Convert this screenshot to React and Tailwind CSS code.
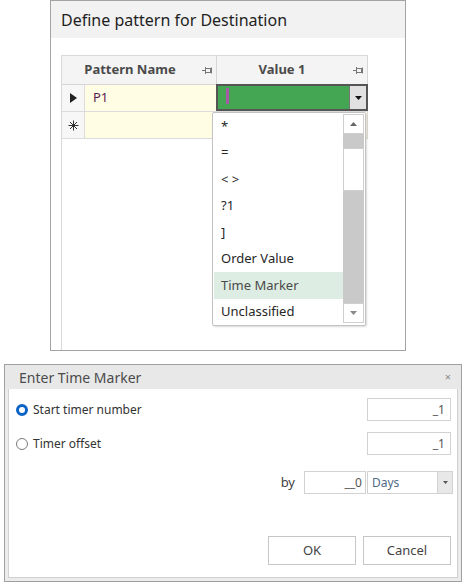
import React from "react";

const Pin = ({ className = "" }) => (
  <svg width="11" height="9" viewBox="0 0 11 9" className={className} fill="none" stroke="#777" strokeWidth="1">
    <line x1="0" y1="4.5" x2="3" y2="4.5" />
    <line x1="3.5" y1="1" x2="3.5" y2="8" />
    <rect x="3.5" y="2.5" width="5" height="4" />
    <line x1="9.5" y1="1.5" x2="9.5" y2="7.5" />
  </svg>
);

const Asterisk = () => (
  <svg width="11" height="11" viewBox="0 0 11 11" stroke="#333" strokeWidth="1">
    <line x1="5.5" y1="0.5" x2="5.5" y2="10.5" />
    <line x1="0.5" y1="5.5" x2="10.5" y2="5.5" />
    <line x1="2" y1="2" x2="9" y2="9" />
    <line x1="9" y1="2" x2="2" y2="9" />
  </svg>
);

const listItems = ["*", "=", "< >", "?1", "]", "Order Value", "Time Marker", "Unclassified"];

function PatternEditor() {
  return (
    <div className="ml-[50px] w-[356px] h-[351px] border border-[#a3a3a3] flex flex-col relative">
      <div className="h-[37px] bg-[#f2f2f2] pl-[10px] flex items-center text-[16px] text-[#1e1e1e]">
        Define pattern for Destination
      </div>
      <div className="flex-1 bg-white pt-[17px] pl-[10px] pr-[37px] flex flex-col">
        <div className="flex-1 border-l border-t border-[#d9d9d9] flex flex-col">
          {/* header */}
          <div className="h-[29px] flex border-b border-r border-[#d6d6d6] bg-[#f4f4f4] text-[13px] font-bold text-[#4a4a4a]">
            <div className="w-[155px] border-r border-[#d6d6d6] relative flex items-center justify-center pr-[18px]">
              Pattern Name
              <Pin className="absolute right-[3px] top-[10px]" />
            </div>
            <div className="flex-1 relative flex items-center justify-center pr-[20px]">
              Value 1
              <Pin className="absolute right-[3px] top-[10px]" />
            </div>
          </div>
          {/* row 1 */}
          <div className="h-[27px] flex border-b border-r border-[#dcdcdc]">
            <div className="w-[23px] border-r border-[#dcdcdc] bg-[#f7f7f7] flex items-center justify-center">
              <svg width="7" height="10" viewBox="0 0 7 10"><path d="M0 0 L7 5 L0 10 Z" fill="#222" /></svg>
            </div>
            <div className="w-[132px] border-r border-[#dcdcdc] bg-[#fffde3] flex items-center pl-[8px] text-[13px] text-[#561d54]">
              P1
            </div>
            <div className="flex-1 relative">
              <div className="absolute left-[-1px] top-[-1px] right-[-1px] bottom-[0px] border-2 border-[#555] bg-[#44a553] flex">
                <div className="flex-1 relative">
                  <div className="absolute left-[8px] top-[2px] w-[3px] h-[16px] bg-[#a65aa6]" />
                </div>
                <div className="w-[17px] bg-[#e1e1e1] border-l border-[#777] flex items-center justify-center">
                  <svg width="7" height="4" viewBox="0 0 7 4"><path d="M0 0 L7 0 L3.5 4 Z" fill="#111" /></svg>
                </div>
              </div>
            </div>
          </div>
          {/* row 2 (new row) */}
          <div className="h-[27px] flex border-b border-r border-[#dcdcdc]">
            <div className="w-[23px] border-r border-[#dcdcdc] bg-[#f7f7f7] flex items-center justify-center">
              <Asterisk />
            </div>
            <div className="w-[132px] border-r border-[#dcdcdc] bg-[#fffde3]" />
            <div className="flex-1 bg-[#fffde3]" />
          </div>
          <div className="flex-1" />
        </div>
      </div>

      {/* value picker list */}
      <div className="absolute left-[161px] top-[111px] w-[154px] h-[214px] bg-white border border-[#c3c3c3] rounded-[2px] shadow-[1px_1px_2px_rgba(0,0,0,0.15)] flex">
        <div className="flex-1 flex flex-col pl-[1px]">
          {listItems.map((t) => (
            <div
              key={t}
              className={
                "h-[26.5px] flex items-center pl-[7px] text-[13px] " +
                (t === "Time Marker" ? "bg-[#ddede3] text-[#4a4a4a]" : "text-[#262626]")
              }
            >
              {t}
            </div>
          ))}
        </div>
        <div className="w-[21px] mr-[1px] mt-[1px] mb-[2px] bg-[#c9c9c9] flex flex-col">
          <div className="h-[20px] bg-white border border-[#cfcfcf] flex items-center justify-center">
            <svg width="7" height="4" viewBox="0 0 7 4"><path d="M0 4 L7 4 L3.5 0 Z" fill="#666" /></svg>
          </div>
          <div className="h-[14px]" />
          <div className="h-[43px] bg-white border border-[#cfcfcf]" />
          <div className="flex-1" />
          <div className="h-[20px] bg-white border border-[#cfcfcf] flex items-center justify-center">
            <svg width="7" height="4" viewBox="0 0 7 4"><path d="M0 0 L7 0 L3.5 4 Z" fill="#888" /></svg>
          </div>
        </div>
      </div>
    </div>
  );
}

function TimeMarkerDialog() {
  return (
    <div className="mt-[13px] ml-[4px] w-[458px] h-[218px] border border-[#a0a0a0] flex flex-col bg-[#ececec]">
      <div className="h-[24px] bg-[#e8e8e8] flex items-center pl-[14px] pr-[10px] text-[14px] text-[#4b4b4b]">
        <span className="flex-1">Enter Time Marker</span>
        <span className="text-[11px] text-[#8a8a8a]">×</span>
      </div>
      <div className="flex-1 px-[3px] pb-[3px] flex flex-col">
        <div className="flex-1 bg-white border-l border-r border-b border-[#d0d0d0] pt-[9px] pl-[7px] pr-[6px] flex flex-col text-[12px] text-[#333]">
          <div className="h-[23px] flex items-center">
            <div className="w-[12px] h-[12px] rounded-full border-[3.5px] border-[#0b63c5] bg-white" />
            <span className="ml-[5px] flex-1">Start timer number</span>
            <div className="w-[84px] h-[23px] border border-[#d2d2d2] flex items-center justify-end pr-[5px] text-[12px] text-[#555]">_1</div>
          </div>
          <div className="h-[23px] mt-[11px] flex items-center">
            <div className="w-[12px] h-[12px] rounded-full border border-[#7a7a7a] bg-white" />
            <span className="ml-[5px] flex-1">Timer offset</span>
            <div className="w-[84px] h-[23px] border border-[#d2d2d2] flex items-center justify-end pr-[5px] text-[12px] text-[#555]">_1</div>
          </div>
          <div className="h-[23px] mt-[16px] mr-[-2px] flex items-center justify-end">
            <span className="text-[13px] text-[#444]">by</span>
            <div className="ml-[9px] w-[62px] h-[23px] border border-[#d2d2d2] flex items-center justify-end pr-[3px] text-[12px] text-[#555]">__0</div>
            <div className="ml-[1px] w-[86px] h-[23px] border border-[#d2d2d2] flex">
              <span className="flex-1 pl-[4px] flex items-center text-[12px] text-[#4e6a85]">Days</span>
              <div className="w-[15px] bg-[#e8e8e8] border-l border-[#d2d2d2] flex items-center justify-center">
                <svg width="5" height="3" viewBox="0 0 5 3"><path d="M0 0 L5 0 L2.5 3 Z" fill="#555" /></svg>
              </div>
            </div>
          </div>
          <div className="mt-[42px] flex justify-end gap-[7px]">
            <button className="w-[88px] h-[29px] border border-[#c6c6c6] bg-white text-[13px] text-[#444]">OK</button>
            <button className="w-[88px] h-[29px] border border-[#c6c6c6] bg-white text-[13px] text-[#444]">Cancel</button>
          </div>
        </div>
      </div>
    </div>
  );
}

export default function App() {
  return (
    <div className="w-[468px] h-[588px] bg-white overflow-hidden font-['Noto_Sans',sans-serif]">
      <PatternEditor />
      <TimeMarkerDialog />
    </div>
  );
}
